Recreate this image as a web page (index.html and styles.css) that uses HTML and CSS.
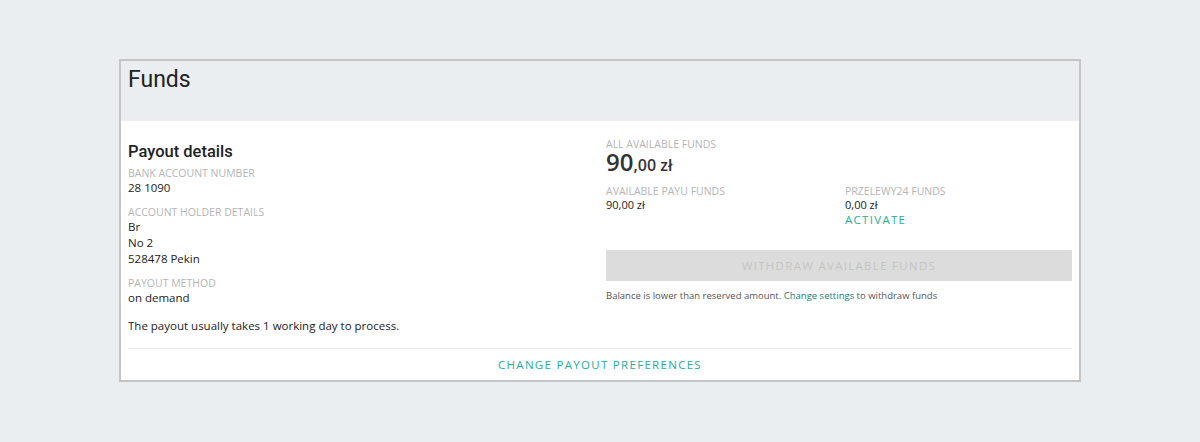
FILE: index.html
```html
<!DOCTYPE html>
<html>
<head>
<meta charset="utf-8">
<link rel="stylesheet" href="styles.css">
</head>
<body>
<div class="card">
  <div class="card-header">
    <h1 class="title">Funds</h1>
  </div>
  <div class="card-body">
    <div class="cols">
      <div class="col-left">
        <h2 class="subtitle">Payout details</h2>
        <div class="group">
          <div class="label">Bank account number</div>
          <div class="value">28 1090</div>
        </div>
        <div class="group">
          <div class="label">Account holder details</div>
          <div class="value">Br</div>
          <div class="value">No 2</div>
          <div class="value">528478 Pekin</div>
        </div>
        <div class="group">
          <div class="label">Payout method</div>
          <div class="value">on demand</div>
        </div>
        <p class="note">The payout usually takes 1 working day to process.</p>
      </div>
      <div class="col-right">
        <div class="label">All available funds</div>
        <div class="amount"><span class="amount-int">90</span><span class="amount-dec">,00 zł</span></div>
        <div class="subfunds">
          <div class="fund">
            <div class="label">Available PayU funds</div>
            <div class="value2">90,00 zł</div>
          </div>
          <div class="fund">
            <div class="label">Przelewy24 funds</div>
            <div class="value2">0,00 zł</div>
            <a class="link-upper">Activate</a>
          </div>
        </div>
        <button class="btn-withdraw" disabled>Withdraw available funds</button>
        <p class="hint">Balance is lower than reserved amount. <a class="link">Change settings</a> to withdraw funds</p>
      </div>
    </div>
    <div class="card-footer">
      <a class="link-upper footer-link">Change payout preferences</a>
    </div>
  </div>
</div>
</body>
</html>
```

FILE: styles.css
```css
* { box-sizing: border-box; }
html, body { margin: 0; padding: 0; }
body {
  background: #eaeef1;
  font-family: "Open Sans", "Liberation Sans", sans-serif;
  color: #222;
  padding: 59px 119px 0;
}
.card {
  border: 2px solid #c4c4c4;
  background: #fff;
  width: 962px;
}
.card-header {
  background: #eaeef1;
  height: 60px;
  padding: 5px 7px;
}
.title {
  margin: 0;
  font-family: Roboto, "Liberation Sans", sans-serif;
  font-weight: 400;
  font-size: 23px;
  line-height: 28px;
  color: #222;
}
.card-body {
  padding: 17px 7px 6px;
}
.cols {
  display: grid;
  grid-template-columns: 478px 1fr;
}
.subtitle {
  margin: 3px 0 0;
  font-family: Roboto, "Liberation Sans", sans-serif;
  font-weight: 500;
  font-size: 16.5px;
  line-height: 22px;
  color: #222;
}
.group { margin-top: 4px; }
.group + .group { margin-top: 10px; }
.label {
  font-size: 10.5px;
  line-height: 13px;
  color: #b5b5b5;
  text-transform: uppercase;
}
.value {
  font-size: 11.5px;
  line-height: 16px;
  color: #222;
}
.note {
  margin: 12px 0 0;
  font-size: 11.5px;
  line-height: 16px;
  color: #222;
}
.amount {
  font-weight: 600;
  line-height: 22px;
  color: #333;
  margin-top: 0;
}
.amount-int { font-size: 24px; }
.amount-dec { font-size: 16px; }
.subfunds {
  display: grid;
  grid-template-columns: 239px 1fr;
  margin-top: 9px;
}
.value2 {
  font-size: 11px;
  line-height: 14px;
  color: #222;
}
.link-upper {
  display: block;
  font-size: 11.5px;
  line-height: 15px;
  color: #26ad9c;
  text-transform: uppercase;
  letter-spacing: 1.3px;
}
.btn-withdraw {
  display: block;
  width: 100%;
  height: 31px;
  margin-top: 23px;
  border: 0;
  border-radius: 1px;
  background: #dcdcdc;
  color: #c4c4c4;
  font-family: "Open Sans", "Liberation Sans", sans-serif;
  font-size: 11.5px;
  text-transform: uppercase;
  letter-spacing: 1.3px;
}
.hint {
  margin: 8px 0 0;
  font-size: 9.5px;
  line-height: 14px;
  color: #555;
}
.link { color: #147f78; }
.card-footer {
  margin-top: 14px;
  border-top: 1px solid #ececec;
  padding-top: 3px;
  text-align: center;
}
.footer-link {
  display: inline-block;
  line-height: 16px;
}
```
